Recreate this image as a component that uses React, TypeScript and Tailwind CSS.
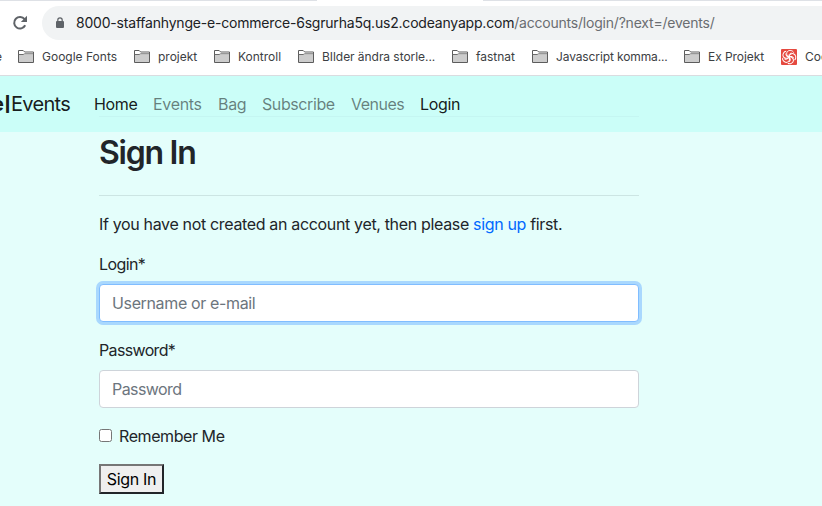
import React from "react";

function Folder() {
  return (
    <svg width="16" height="13" viewBox="0 0 16 13" className="shrink-0">
      <path d="M.5 12.5V.5H5.2L6.7 2H15.5V12.5Z" fill="#fff" stroke="#5c5c5c" />
      <path d="M1 4.5H15V12H1Z" fill="#cccccc" />
      <path d="M.5 4.5H5.2L6.7 3.8H15.5" fill="none" stroke="#6b6b6b" />
    </svg>
  );
}

function Bookmark({ label, width, track }: { label: string; width: string; track: string }) {
  return (
    <div className={`flex shrink-0 items-center gap-2 ${width}`}>
      <Folder />
      <span className={`whitespace-nowrap ${track}`}>{label}</span>
    </div>
  );
}

function BrowserBar() {
  return (
    <header className="flex h-[76px] flex-col border-b border-[#dadce0] bg-white">
      <div className="flex h-px justify-between">
        <div className="w-[317px] bg-[#dee1e6]" />
        <div className="w-[339px] bg-[#dee1e6]" />
      </div>
      <div className="flex h-[42px] shrink-0 items-center pt-px pl-[12px]">
        <svg width="16" height="16" viewBox="0 0 16 16" fill="none" className="mr-[14px] shrink-0">
          <path d="M13.2 10.3A5.8 5.8 0 1 1 12.6 4.2" stroke="#5f6368" strokeWidth="2" />
          <path d="M15 .8V7H8.8Z" fill="#5f6368" />
        </svg>
        <div className="flex h-[34px] flex-1 items-center rounded-l-full bg-[#f1f3f4] pl-[14px]">
          <svg width="8" height="12" viewBox="0 0 8 12" className="mr-[12px] shrink-0">
            <rect y="4" width="8" height="7" rx="1" fill="#5f6368" />
            <path d="M1.8 4.5V3a2.2 2.2 0 0 1 4.4 0v1.5" fill="none" stroke="#5f6368" strokeWidth="1.2" />
          </svg>
          <span className="text-[14px] whitespace-nowrap text-[#202124]">
            <span className="tracking-[-0.2px]">8000-staffanhynge-e-commerce-6sgrurha5q.us2.codeanyapp.com</span>
            <span className="tracking-[-0.21px] text-[#6a6d71]">/accounts/login/?next=/events/</span>
          </span>
        </div>
      </div>
      <nav className="flex h-[27px] shrink-0 items-center overflow-hidden text-[12px] text-[#3c4043]">
        <span className="-ml-[5px] w-[23px] shrink-0">e</span>
        <Bookmark label="Google Fonts" width="w-[116px]" track="tracking-[0px]" />
        <Bookmark label="projekt" width="w-[80px]" track="tracking-[0px]" />
        <Bookmark label="Kontroll" width="w-[84px]" track="tracking-[0px]" />
        <Bookmark label="BIlder ändra storle..." width="w-[154px]" track="tracking-[-0.05px]" />
        <Bookmark label="fastnat" width="w-[80px]" track="tracking-[0px]" />
        <Bookmark label="Javascript komma..." width="w-[152px]" track="tracking-[-0.12px]" />
        <Bookmark label="Ex Projekt" width="w-[97px]" track="tracking-[-0.05px]" />
        <svg width="16" height="16" viewBox="0 0 16 16" className="mr-2 shrink-0">
          <rect width="16" height="16" rx="1" fill="#e5493f" />
          <g fill="none" stroke="#fff" strokeWidth="1">
            {[0, 72, 144, 216, 288].map((angle) => (
              <path key={angle} transform={`rotate(${angle} 8 8)`} d="M8 8C5.5 7 5 4 6.6 2.4S11.8 1.2 12.6 3.6M8 8C7.6 6.2 8.5 4.2 10.6 4" />
            ))}
          </g>
        </svg>
        <span className="shrink-0 whitespace-nowrap">Code</span>
      </nav>
    </header>
  );
}

function SiteNav() {
  return (
    <nav className="relative flex h-[56px] items-center bg-[#cbfef8] text-[16px] tracking-[-0.33px] text-black/50">
      <div className="-ml-[8px] flex w-[102px] shrink-0 items-center text-[20px] whitespace-nowrap text-black/90">
        <b className="w-[12.5px] font-bold">e</b>
        <b className="w-[7px] pt-px text-[15px] font-black">|</b>
        <span className="-ml-[0.5px] tracking-[-0.7px]">Events</span>
      </div>
      <a className="w-[59px] text-black/90">Home</a>
      <a className="w-[65px]">Events</a>
      <a className="w-[44px]">Bag</a>
      <a className="w-[89px] tracking-[-0.4px]">Subscribe</a>
      <a className="w-[69px] tracking-[-0.5px]">Venues</a>
      <a className="text-black/90">Login</a>
      <div className="absolute top-[40px] left-[99px] h-px w-[540px] bg-[#c5f6f2]" />
    </nav>
  );
}

export default function App() {
  return (
    <div className="h-[506px] w-[822px] overflow-hidden bg-[#e4fefb] font-['Inter',sans-serif] text-[#212529]">
      <BrowserBar />
      <SiteNav />
      <main className="ml-[99px] w-[540px] text-[16px] leading-[24px] tracking-[-0.34px]">
        <h1 className="pt-[2px] text-[32px] leading-[38px] font-[560] tracking-[-1.25px]">Sign In</h1>
        <hr className="mt-[23px] border-[#cce5e3]" />
        <p className="mt-[16px] whitespace-nowrap">
          If you have not created an account yet, then please <a className="text-[#0069ff]">sign up</a> first.
        </p>
        <form>
          <label className="mt-[16px] block tracking-[-0.6px]">Login*</label>
          <input className="mt-[8px] block h-[38px] w-full rounded-[4px] border border-[#80bdff] bg-white px-3 tracking-[-0.36px] shadow-[0_0_0_3px_#a9d8fe] placeholder:text-[#6c757d]" placeholder="Username or e-mail" />
          <label className="mt-[16px] block tracking-[-0.65px]">Password*</label>
          <input className="mt-[8px] block h-[38px] w-full rounded-[4px] border border-[#ced4da] bg-white px-3 tracking-[-0.58px] placeholder:text-[#6c757d]" placeholder="Password" />
          <label className="mt-[16px] flex items-center gap-[7px] tracking-[-0.42px]">
            <span className="mb-[2px] size-[13px] rounded-[2.5px] border border-[#767676] bg-white" />
            Remember Me
          </label>
          <button className="mt-[16px] block h-[30px] w-[65px] border-2 border-t-[#767676] border-r-[#212529] border-b-[#212529] border-l-[#767676] bg-[#efefef] whitespace-nowrap text-black">Sign In</button>
        </form>
      </main>
    </div>
  );
}
